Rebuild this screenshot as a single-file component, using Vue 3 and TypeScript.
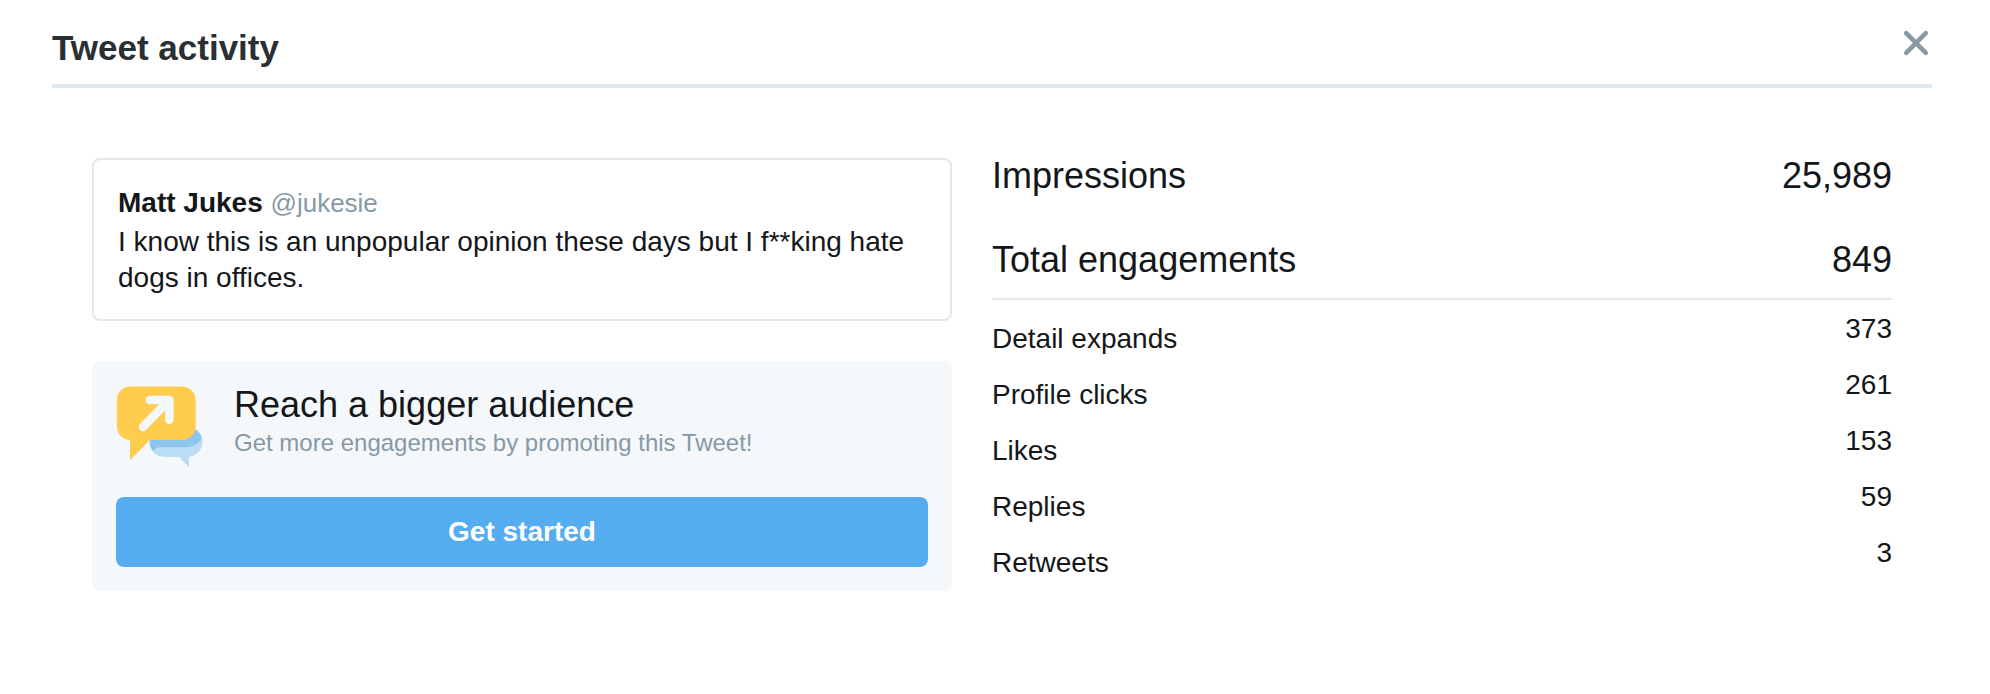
<script setup lang="ts">
interface Metric {
  label: string
  value: number
}

const tweet = {
  author: 'Matt Jukes',
  handle: '@jukesie',
  text: 'I know this is an unpopular opinion these days but I f**king hate dogs in offices.',
}

const totals: Metric[] = [
  { label: 'Impressions', value: 25989 },
  { label: 'Total engagements', value: 849 },
]

const details: Metric[] = [
  { label: 'Detail expands', value: 373 },
  { label: 'Profile clicks', value: 261 },
  { label: 'Likes', value: 153 },
  { label: 'Replies', value: 59 },
  { label: 'Retweets', value: 3 },
]

const format = (value: number): string => value.toLocaleString('en-US')
</script>

<template>
  <section class="dialog" role="dialog" aria-labelledby="dialog-title">
    <header class="header">
      <h1 id="dialog-title" class="title">Tweet activity</h1>
      <button class="close" type="button" aria-label="Close">
        <svg viewBox="0 0 32 32" width="32" height="32" aria-hidden="true">
          <path d="M6.2 6.2 25.8 25.8M25.8 6.2 6.2 25.8" />
        </svg>
      </button>
    </header>

    <div class="body">
      <div class="side">
        <article class="tweet">
          <p class="byline">
            <strong>{{ tweet.author }}</strong>
            {{ ' ' }}
            <span class="handle">{{ tweet.handle }}</span>
          </p>
          <p class="text">{{ tweet.text }}</p>
        </article>

        <section class="promo">
          <div class="pitch">
            <svg class="bubbles" viewBox="0 0 88 84" width="88" height="84" aria-hidden="true">
              <path
                fill="#8dc6ec"
                d="M48.3 42H71.5a14.6 14.6 0 0 1 0 29.5H48.3a14.6 14.6 0 0 1 0-29.5z"
              />
              <path
                fill="#bbddf3"
                d="M37.4 66.6Q39.8 62.3 44 62.3H70C78 62.3 83.6 58.2 85.5 52.5A14.7 14.7 0 0 1 72.9 71.5V82.6L62.8 71.5H48.3A14.7 14.7 0 0 1 37.4 66.6z"
              />
              <path
                fill="#ffcc4d"
                d="M14.4 1.6H66.2A13.5 13.5 0 0 1 79.7 15.1V41.5A13.5 13.5 0 0 1 66.2 55H33.8L14 75.2V55A13.5 13.5 0 0 1 .9 41.5V15.1A13.5 13.5 0 0 1 14.4 1.6z"
              />
              <path
                fill="none"
                stroke="#f5f8fa"
                stroke-width="8.4"
                stroke-linecap="round"
                stroke-linejoin="round"
                d="M33.7 15H53.4V34.8M52.6 15.8 27 42"
              />
            </svg>
            <div>
              <h2 class="pitch-title">Reach a bigger audience</h2>
              <p class="pitch-text">Get more engagements by promoting this Tweet!</p>
            </div>
          </div>
          <button class="start" type="button">Get started</button>
        </section>
      </div>

      <div class="metrics">
        <dl class="totals">
          <div v-for="item in totals" :key="item.label" class="row">
            <dt>{{ item.label }}</dt>
            <dd>{{ format(item.value) }}</dd>
          </div>
        </dl>
        <dl class="details">
          <div v-for="item in details" :key="item.label" class="row">
            <dt>{{ item.label }}</dt>
            <dd>{{ format(item.value) }}</dd>
          </div>
        </dl>
      </div>
    </div>
  </section>
</template>

<style>
body {
  background: #fff;
}
</style>

<style scoped>
.dialog {
  padding: 24px 58px 64px 52px;
  color: #14171a;
  font-family: "Liberation Sans", Arial, sans-serif;
  font-size: 28px;
  line-height: 36px;
}

h1,
h2,
p,
dl,
dd {
  margin: 0;
}

.header {
  display: flex;
  justify-content: space-between;
  align-items: flex-start;
  padding-bottom: 12px;
  border-bottom: 4px solid #e1e8ed;
}

.title {
  color: #292f33;
  font-size: 35px;
  line-height: 48px;
}

button {
  border: 0;
  font: inherit;
  cursor: pointer;
}

.close {
  display: flex;
  align-items: center;
  height: 38px;
  padding: 0;
  background: none;
}

.close path {
  fill: none;
  stroke: #8899a6;
  stroke-width: 4.6;
  stroke-linecap: round;
}

.body {
  display: grid;
  grid-template-columns: 43fr 45fr;
  gap: 40px;
  align-items: start;
  padding: 70px 40px 0;
}

.side {
  display: grid;
  gap: 40px;
}

.tweet {
  padding: 25px 24px 23px;
  border: 2px solid #e1e8ed;
  border-radius: 8px;
}

.byline {
  margin-bottom: 3px;
}

.handle {
  color: #8899a6;
  font-size: 26px;
}

.promo {
  padding: 24px;
  border-radius: 8px;
  background: #f5f8fa;
}

.pitch {
  display: flex;
  gap: 30px;
  margin-bottom: 28px;
}

.bubbles {
  flex: none;
}

.pitch-title {
  font-size: 36px;
  font-weight: 400;
  line-height: 40px;
}

.pitch-text {
  color: #8899a6;
  font-size: 24px;
}

.start {
  width: 100%;
  height: 70px;
  border-radius: 8px;
  background: #55acee;
  color: #fff;
  font-weight: 700;
}

.row {
  display: flex;
  justify-content: space-between;
  gap: 24px;
}

.totals {
  display: grid;
  gap: 48px;
  padding-bottom: 20px;
  border-bottom: 2px solid #e1e8ed;
  font-size: 36px;
}

.details {
  display: grid;
  gap: 10px;
  padding-top: 11px;
}

.details dt {
  padding-top: 10px;
}
</style>
